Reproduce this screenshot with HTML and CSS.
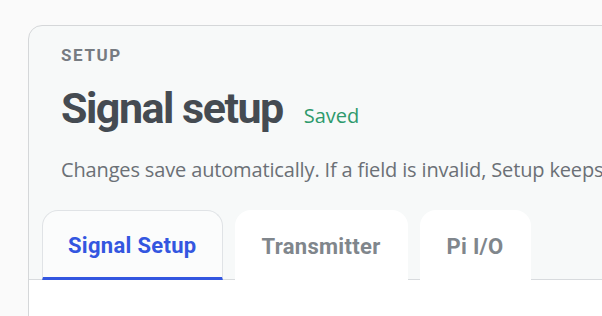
FILE: index.html
```html
<!DOCTYPE html>
<html>
<head>
<meta charset="utf-8">
<link rel="stylesheet" href="styles.css">
</head>
<body>
<div class="page">
  <section class="card">
    <header class="card-head">
      <div class="eyebrow">SETUP</div>
      <div class="title-row">
        <h1 class="title">Signal setup</h1>
        <span class="status">Saved</span>
      </div>
      <p class="desc">Changes save automatically. If a field is invalid, Setup keeps the last valid value.</p>
      <nav class="tabs">
        <div class="tab active">Signal Setup</div>
        <div class="tab">Transmitter</div>
        <div class="tab">Pi I/O</div>
      </nav>
    </header>
    <div class="panel"></div>
  </section>
</div>
</body>
</html>
```

FILE: styles.css
```css
html, body {
  margin: 0;
  padding: 0;
  background: #fafafa;
  overflow: hidden;
}
.page {
  padding: 25px 0 0 28px;
  width: 800px;
  height: 291px;
  overflow: hidden;
}
.card {
  border: 1px solid #d5d7d9;
  border-radius: 14px;
  background: #f7f9f9;
  overflow: hidden;
}
.card-head {
  padding: 19px 0 0 0;
}
.eyebrow {
  margin-left: 32px;
  font-family: Roboto, "Liberation Sans", sans-serif;
  font-weight: 700;
  font-size: 17px;
  line-height: 20px;
  letter-spacing: 1.6px;
  color: #767b81;
}
.title-row {
  margin: 18px 0 0 32px;
  display: flex;
  align-items: baseline;
  gap: 21px;
}
.title {
  margin: 0;
  font-family: Roboto, "Liberation Sans", sans-serif;
  font-weight: 700;
  font-size: 43px;
  line-height: 50px;
  letter-spacing: -1.5px;
  color: #454b52;
}
.status {
  font-family: "Open Sans", "Noto Sans", sans-serif;
  font-size: 20px;
  color: #2e9a6c;
}
.desc {
  margin: 24px 0 0 32px;
  white-space: nowrap;
  font-family: "Open Sans", "Noto Sans", sans-serif;
  font-size: 20px;
  line-height: 26px;
  letter-spacing: -0.15px;
  color: #6b7076;
}
.tabs {
  margin-top: 27px;
  padding-left: 13px;
  display: flex;
  gap: 12px;
  border-bottom: 1px solid #d8dbde;
}
.tab {
  height: 70px;
  padding: 2px 27px 0;
  display: flex;
  align-items: center;
  justify-content: center;
  box-sizing: border-box;
  border-radius: 16px 16px 0 0;
  background: #ffffff;
  font-family: Roboto, "Liberation Sans", sans-serif;
  font-weight: 700;
  font-size: 22px;
  letter-spacing: 0.3px;
  color: #80868c;
  margin-bottom: -1px;
}
.tab.active {
  background: #fbfcfc;
  border: 1px solid #e0e3e6;
  border-bottom: 3px solid #3356e0;
  color: #3356e0;
  padding: 2px 25px 0;
}
.panel {
  height: 80px;
  background: #ffffff;
}
```
